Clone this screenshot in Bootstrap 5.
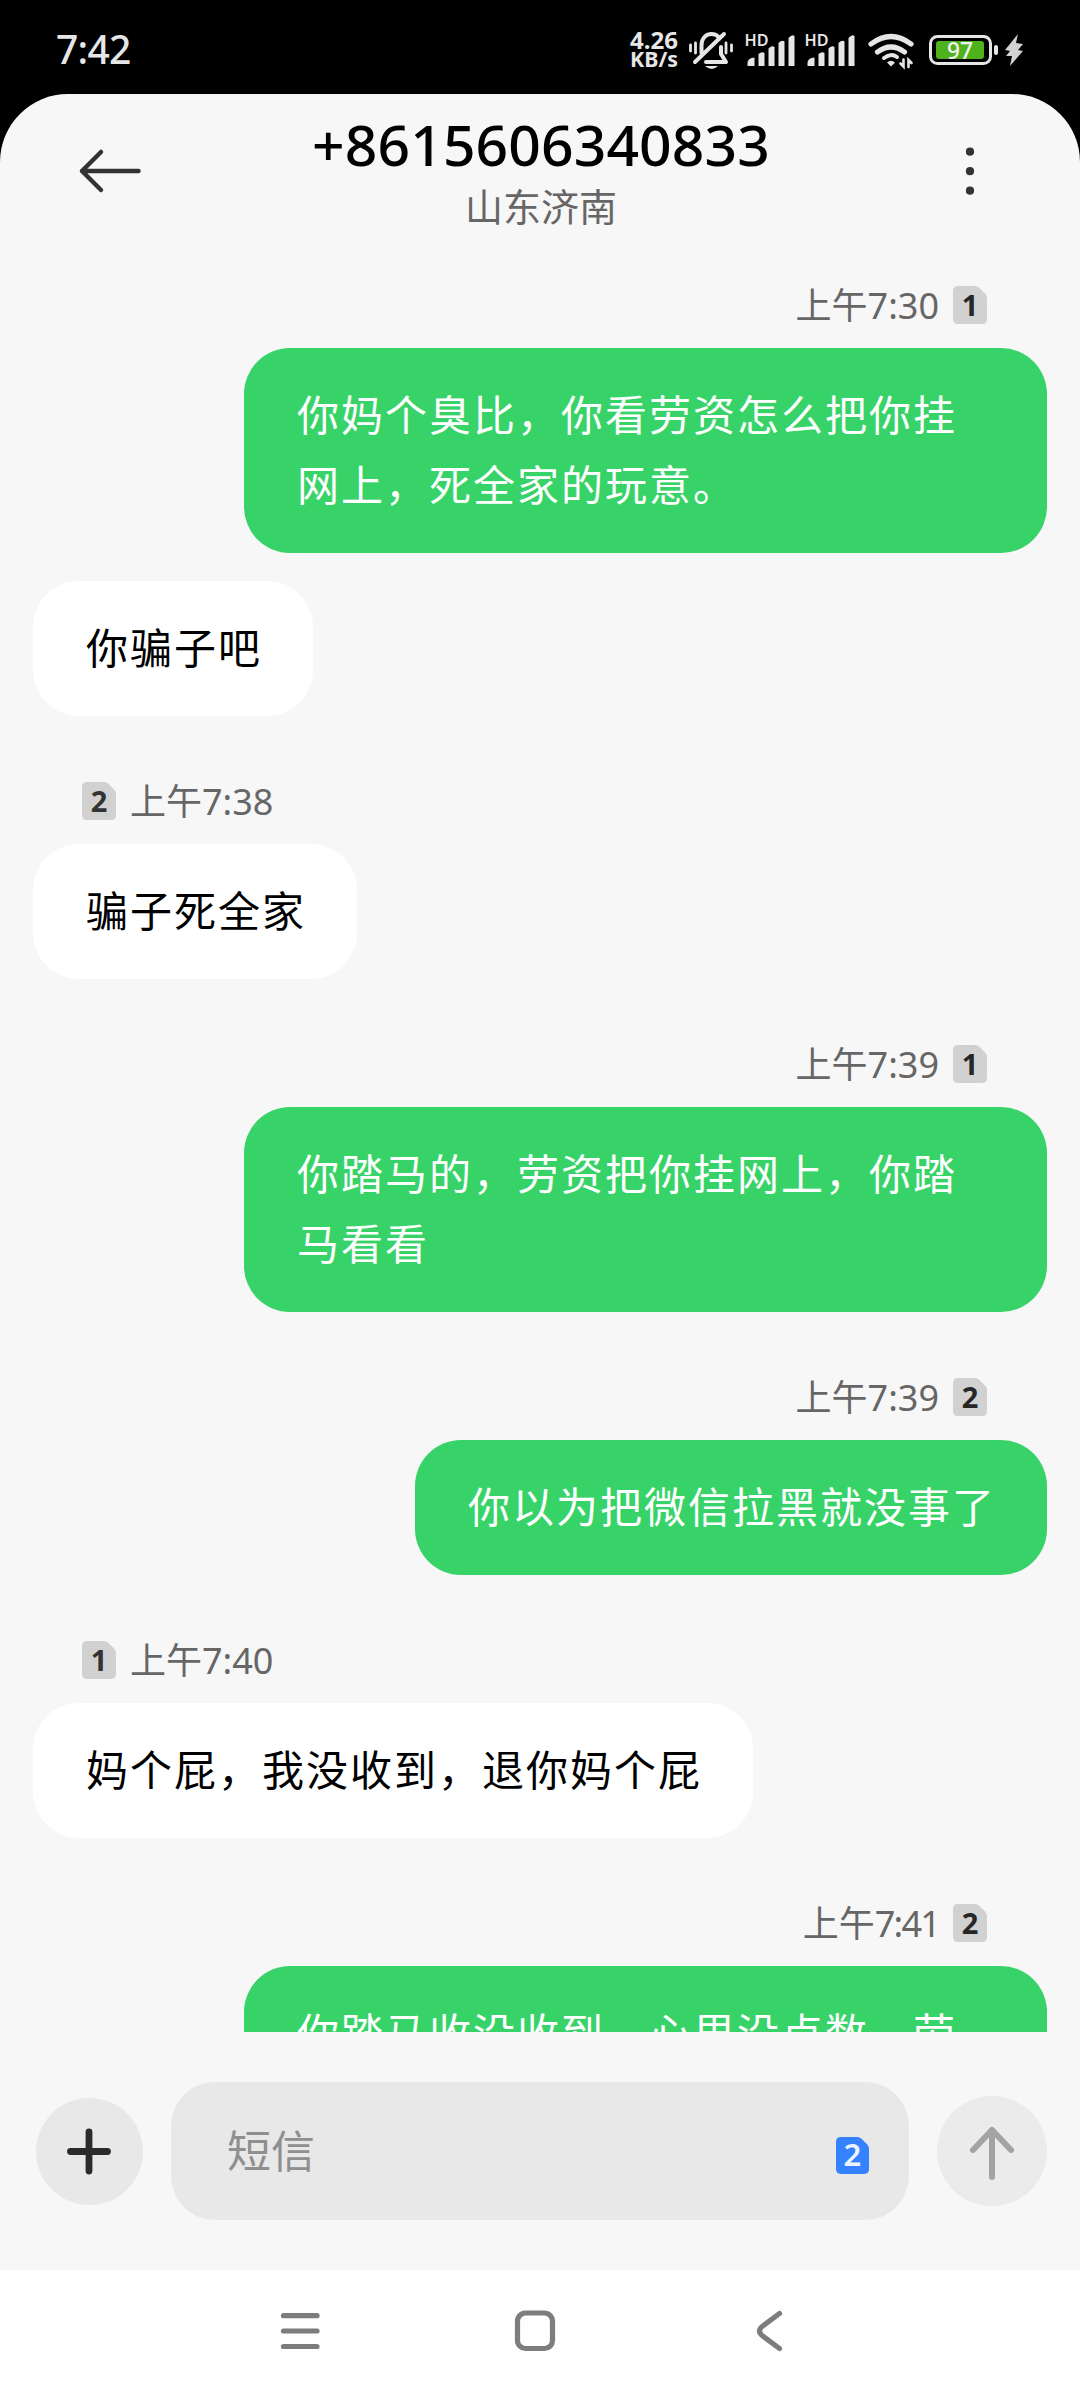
<!DOCTYPE html>
<html lang="zh-CN">
<head>
<meta charset="utf-8">
<meta name="viewport" content="width=device-width, initial-scale=1">
<title>短信</title>
<link href="https://cdn.jsdelivr.net/npm/bootstrap@5.3.0/dist/css/bootstrap.min.css" rel="stylesheet">
<style>
  body { width: 1080px; height: 2400px; overflow: hidden; background: #000; font-family: "Noto Sans", "Noto Sans CJK SC", sans-serif; }
  svg { display: block; flex: none; overflow: visible; }
  svg text { font-family: "Noto Sans", "Noto Sans CJK SC", sans-serif; }
  .statusbar { height: 94px; padding: 0 50px 0 56px; color: #e6e6e6; }
  .clock { font-size: 39px; line-height: 64px; font-weight: 500; letter-spacing: -.7px; padding-top: 17px; }
  .screen { height: 2176px; background: #f7f7f7; border-radius: 68px 68px 0 0; }
  .topbar { height: 156px; padding: 0 96px 0 76px; }
  .title-block { margin-left: -20px; }
  .number { font-size: 57px; line-height: 58px; font-weight: 500; letter-spacing: .1px; color: #000; margin-top: 21px; }
  .place { font-size: 38px; line-height: 50px; color: #666; font-family: "Noto Sans CJK SC", sans-serif; margin-top: 7px; }
  .thread { height: 1782px; padding: 0 33px; }
  .stamp { height: 38px; margin: 66px 0 24px; gap: 14px; font-size: 36px; line-height: 40px; color: #666; }
  .stamp:first-child { margin-top: 36px; }
  .stamp-in { padding-left: 49px; }
  .stamp-out { padding-right: 60px; }
  .tight { letter-spacing: -1.8px; }
  .bubble { max-width: 803px; padding: 30px 51px 35px 53px; border-radius: 46px; font-family: "Noto Sans CJK SC", sans-serif; font-size: 42px; letter-spacing: 2px; line-height: 70px; }
  .bubble-in { background: #fff; color: #000; }
  .bubble-out { background: #38d368; color: #fff; }
  .follow { margin-top: 28px; }
  .composer { height: 238px; padding: 50px 33px 0 36px; }
  .field { width: 738px; height: 138px; border-radius: 44px; background: #e8e8e8; padding: 0 40px 4px 56px; font-size: 44px; line-height: 60px; color: #8f8f8f; font-family: "Noto Sans CJK SC", sans-serif; }
  .field svg { margin-top: 13px; }
  .attach { width: 107px; height: 107px; background: #e8e8e8; margin-right: 28px; }
  .send { width: 110px; height: 110px; background: #ebebeb; margin-left: 28px; }
  .navkeys { height: 130px; background: #fefefe; }
</style>
</head>
<body>
<svg width="0" height="0" class="position-absolute">
  <defs>
    <path id="sim" d="M5 0H22Q24.500 0 26.500 2L32 7.500Q34 9.500 34 12V33Q34 38 29 38H5Q0 38 0 33V5Q0 0 5 0Z"/>
    <g id="bars" fill="#e6e6e6">
      <path d="M7.500 66V63Q7.500 58 14.500 57.500V66Z"/>
      <path d="M18.500 66V54Q22 51 24.500 53V66Z"/>
      <path d="M28.500 66V48.500Q32 45 34.500 47V66Z"/>
      <path d="M38.500 66V43Q42 39.500 44.500 41.500V66Z"/>
      <path d="M48.500 66V38Q52 34 54.500 36V66Z"/>
      <text x="4.500" y="46" font-size="15.500" font-weight="600" textLength="24" lengthAdjust="spacingAndGlyphs">HD</text>
    </g>
  </defs>
</svg>

<header class="statusbar d-flex justify-content-between">
  <div class="clock">7:42</div>
  <div class="d-flex">
    <svg width="60" height="94" viewBox="625 0 60 94" fill="#e6e6e6">
      <text x="630" y="48.500" font-size="22.500" font-weight="700" textLength="48" lengthAdjust="spacingAndGlyphs">4.26</text>
      <text x="630" y="66.500" font-size="20.500" font-weight="700" textLength="48" lengthAdjust="spacingAndGlyphs">KB/s</text>
    </svg>
    <svg width="55" height="94" viewBox="685 0 55 94" fill="none" stroke="#e6e6e6" stroke-width="4" stroke-linecap="round" stroke-linejoin="round">
      <path d="M701.500 53V46C701.500 37 707 34 711.500 34C714.500 34 717 35 718.500 37M721 47V54L726 62H706M695 62L724 34"/>
      <path d="M705 66H718Q712 72 705 66Z" fill="#e6e6e6" stroke="none"/>
      <path d="M690.500 45V51M695.500 43V53M726 43V53M731.500 45V51" stroke-width="2.800"/>
    </svg>
    <svg width="60" height="94" viewBox="0 0 60 94"><use href="#bars"/></svg>
    <svg width="60" height="94" viewBox="0 0 60 94"><use href="#bars"/></svg>
    <svg width="60" height="94" viewBox="860 0 60 94" fill="none" stroke="#e6e6e6" stroke-width="5.200" stroke-linecap="round">
      <path d="M871 44Q891 29 911 44M877.500 52Q891 42 904.500 52"/>
      <path d="M884 58Q891 52.500 897 57" stroke-width="4"/>
      <path d="M887 62.500L891 66.500L895 62.500Q891 59 887 62.500Z" fill="#e6e6e6" stroke="none"/>
      <path d="M903.500 59.500V66.500L900.500 63.500M908.500 67V60L911.500 63" stroke-width="2.600"/>
    </svg>
    <svg width="83" height="94" viewBox="920 0 83 94">
      <rect x="930.500" y="36.500" width="60" height="27" rx="7" fill="none" stroke="#e6e6e6" stroke-width="3"/>
      <rect x="936" y="41" width="48" height="18" rx="3" fill="#4fb21c"/>
      <rect x="994" y="45" width="4" height="10" rx="2" fill="#e6e6e6"/>
      <text x="947" y="59" font-size="24" font-weight="500" fill="#f2f2f2" textLength="26" lengthAdjust="spacingAndGlyphs">97</text>
    </svg>
    <svg width="27" height="94" viewBox="1003 0 27 94" fill="#d2d2d2"><path d="M1018 34L1005 50L1010 51L1006 56L1012 56L1010 66L1023 51L1018 50L1023 44L1016 43Z"/></svg>
  </div>
</header>

<main class="screen">
  <div class="topbar d-flex justify-content-between">
    <svg width="70" height="156" viewBox="76 94 70 156" fill="none" stroke="#333" stroke-width="4.500" stroke-linecap="round" stroke-linejoin="round"><path d="M101 152L82 171L101 190M82 171H138.500"/></svg>
    <div class="title-block text-center flex-grow-1">
      <div class="number">+8615606340833</div>
      <div class="place">山东济南</div>
    </div>
    <svg width="28" height="156" viewBox="956 94 28 156" fill="#333"><circle cx="970" cy="151.700" r="4.100"/><circle cx="970" cy="171.200" r="4.100"/><circle cx="970" cy="190.700" r="4.100"/></svg>
  </div>

  <section class="thread d-flex flex-column overflow-hidden">
    <div class="stamp stamp-out d-flex flex-shrink-0 align-self-end"><span>上午7:30</span><svg width="34" height="38"><use href="#sim" fill="#d1d1d1"/><text x="17" y="29.500" font-size="29" font-weight="700" text-anchor="middle" fill="#262626">1</text></svg></div>
    <div class="bubble bubble-out flex-shrink-0 align-self-end">你妈个臭比，你看劳资怎么把你挂网上，死全家的玩意。</div>
    <div class="bubble bubble-in follow flex-shrink-0 align-self-start">你骗子吧</div>

    <div class="stamp stamp-in d-flex flex-shrink-0 align-self-start"><svg width="34" height="38"><use href="#sim" fill="#d1d1d1"/><text x="17" y="29.500" font-size="29" font-weight="700" text-anchor="middle" fill="#333">2</text></svg><span>上午7:38</span></div>
    <div class="bubble bubble-in flex-shrink-0 align-self-start">骗子死全家</div>

    <div class="stamp stamp-out d-flex flex-shrink-0 align-self-end"><span>上午7:39</span><svg width="34" height="38"><use href="#sim" fill="#d1d1d1"/><text x="17" y="29.500" font-size="29" font-weight="700" text-anchor="middle" fill="#262626">1</text></svg></div>
    <div class="bubble bubble-out flex-shrink-0 align-self-end">你踏马的，劳资把你挂网上，你踏马看看</div>

    <div class="stamp stamp-out d-flex flex-shrink-0 align-self-end"><span>上午7:39</span><svg width="34" height="38"><use href="#sim" fill="#d1d1d1"/><text x="17" y="29.500" font-size="29" font-weight="700" text-anchor="middle" fill="#262626">2</text></svg></div>
    <div class="bubble bubble-out flex-shrink-0 align-self-end">你以为把微信拉黑就没事了</div>

    <div class="stamp stamp-in d-flex flex-shrink-0 align-self-start"><svg width="34" height="38"><use href="#sim" fill="#d1d1d1"/><text x="17" y="29.500" font-size="29" font-weight="700" text-anchor="middle" fill="#333">1</text></svg><span>上午7:40</span></div>
    <div class="bubble bubble-in flex-shrink-0 align-self-start">妈个屁，我没收到，退你妈个屁</div>

    <div class="stamp stamp-out d-flex flex-shrink-0 align-self-end"><span>上午<span class="tight">7:41</span></span><svg width="34" height="38"><use href="#sim" fill="#d1d1d1"/><text x="17" y="29.500" font-size="29" font-weight="700" text-anchor="middle" fill="#262626">2</text></svg></div>
    <div class="bubble bubble-out flex-shrink-0 align-self-end">你踏马收没收到，心里没点数，劳资</div>
  </section>

  <footer class="composer d-flex align-items-start">
    <div class="d-flex align-items-center">
      <div class="attach rounded-circle d-flex align-items-center justify-content-center">
        <svg width="50" height="50" viewBox="0 0 50 50" stroke="#2b2b2b" stroke-width="6.800" stroke-linecap="round"><path d="M5.500 25.500H42.500M24 6V45"/></svg>
      </div>
      <div class="field d-flex align-items-center justify-content-between">
        <span>短信</span>
        <svg width="33" height="37" viewBox="0 0 34 38"><use href="#sim" fill="#3482ff"/><text x="17" y="30" font-size="32" font-weight="600" text-anchor="middle" fill="#eef4ff">2</text></svg>
      </div>
      <div class="send rounded-circle d-flex align-items-center justify-content-center">
        <svg width="60" height="60" viewBox="962 2122 60 60" fill="none" stroke="#a3a3a3" stroke-width="6" stroke-linecap="round" stroke-linejoin="round"><path d="M973 2151L992 2131L1011 2151M992 2131V2178"/></svg>
      </div>
    </div>
  </footer>
</main>

<nav class="navkeys">
  <svg width="1080" height="130" viewBox="0 2270 1080 130" fill="none" stroke="#7d7d7d" stroke-width="5.200" stroke-linecap="round" stroke-linejoin="round">
    <path d="M283.500 2315.700H317M283.500 2331H317M283.500 2346.500H317"/>
    <rect x="517.500" y="2313" width="35" height="35.500" rx="8"/>
    <path d="M779.500 2313.500L761.500 2327Q757.500 2331 761.500 2335L779.500 2348.500"/>
  </svg>
</nav>
<script src="https://cdn.jsdelivr.net/npm/bootstrap@5.3.0/dist/js/bootstrap.bundle.min.js"></script>
</body>
</html>
